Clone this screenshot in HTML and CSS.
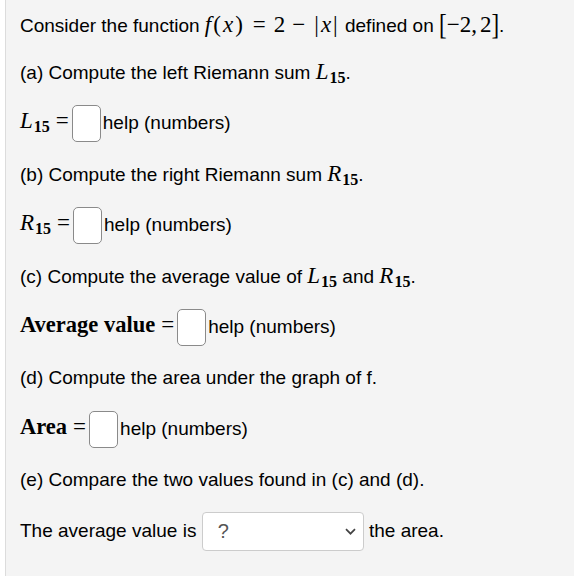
FILE: index.html
```html
<!DOCTYPE html>
<html>
<head>
<meta charset="utf-8">
<link rel="stylesheet" href="styles.css">
</head>
<body>
<div class="page">
  <div class="row first"><p class="line">Consider the function <span class="math"><i>f</i><span class="mo">(</span><i>x</i><span class="mo">)</span><span class="rel">=</span><span class="mn">2</span><span class="bin">−</span><span class="mo">|</span><i>x</i><span class="mo">|</span></span> defined on <span class="math"><span class="big">[</span><span class="mn">−2,</span><span class="mn sp">2</span><span class="big">]</span></span>.</p></div>
  <div class="row"><p class="line">(a) Compute the left Riemann sum <span class="math"><i>L</i><sub>15</sub></span>.</p></div>
  <div class="row"><p class="line"><span class="math"><i>L</i><sub>15</sub><span class="rel tight">=</span></span><span class="ans"></span>help (numbers)</p></div>
  <div class="row"><p class="line">(b) Compute the right Riemann sum <span class="math"><i>R</i><sub>15</sub></span>.</p></div>
  <div class="row"><p class="line"><span class="math"><i>R</i><sub>15</sub><span class="rel tight">=</span></span><span class="ans"></span>help (numbers)</p></div>
  <div class="row"><p class="line">(c) Compute the average value of <span class="math"><i>L</i><sub>15</sub></span> and <span class="math"><i>R</i><sub>15</sub></span>.</p></div>
  <div class="row"><p class="line"><span class="math"><b class="mt">Average value</b><span class="rel tight">=</span></span><span class="ans"></span>help (numbers)</p></div>
  <div class="row"><p class="line">(d) Compute the area under the graph of f.</p></div>
  <div class="row"><p class="line"><span class="math"><b class="mt">Area</b><span class="rel tight">=</span></span><span class="ans"></span>help (numbers)</p></div>
  <div class="row"><p class="line">(e) Compare the two values found in (c) and (d).</p></div>
  <div class="row"><p class="line">The average value is <span class="select"><span class="q">?</span><svg class="chev" width="11" height="7" viewBox="0 0 11 7"><path d="M1 1.2 L5.5 5.7 L10 1.2" fill="none" stroke="#444" stroke-width="1.7"/></svg></span> the area.</p></div>
</div>
</body>
</html>
```
FILE: styles.css
```css
html, body {
  margin: 0;
  padding: 0;
  background: #ffffff;
}
.page {
  margin-left: 5px;
  border-left: 1px solid #dcdcdc;
  background: #f4f4f4;
  min-height: 576px;
  box-sizing: border-box;
  padding: 9px 0 0 14px;
  display: flex;
  flex-direction: column;
  gap: 11px;
  font-family: "Liberation Sans", Arial, sans-serif;
  font-size: 19px;
  color: #000;
}
.row {
  height: 40px;
  display: flex;
  align-items: center;
}
.row.first {
  height: 32px;
}
.line {
  margin: 0;
  white-space: nowrap;
  line-height: 22px;
}
.math {
  font-family: "Liberation Serif", "Times New Roman", serif;
  font-size: 23px;
  white-space: nowrap;
}
.math i {
  font-style: italic;
}
.math sub {
  font-size: 16px;
  font-style: normal;
  font-weight: bold;
  vertical-align: -4px;
  line-height: 0;
  margin-left: 1px;
}
.rel {
  margin: 0 8px;
}
.rel.tight {
  margin: 0 3px 0 6px;
}
.bin {
  margin: 0 7px;
}
.mo {
  margin: 0 2px;
}
.sp {
  margin-left: 3px;
}
.big {
  display: inline-block;
  transform: scaleY(1.3);
}
.mt {
  font-weight: bold;
  font-size: 22.5px;
}
.ans {
  display: inline-block;
  width: 29px;
  height: 37px;
  box-sizing: border-box;
  border: 1px solid #8a8a8a;
  border-radius: 5px;
  background: #fff;
  vertical-align: middle;
  margin-right: 2px;
}
.select {
  display: inline-flex;
  align-items: center;
  justify-content: space-between;
  width: 162px;
  height: 39px;
  box-sizing: border-box;
  border: 1px solid #cccccc;
  border-radius: 4px;
  background: #fff;
  vertical-align: middle;
  padding: 0 7px 0 15px;
}
.q {
  color: #555;
  font-size: 20px;
}
.chev {
  display: block;
}
```
